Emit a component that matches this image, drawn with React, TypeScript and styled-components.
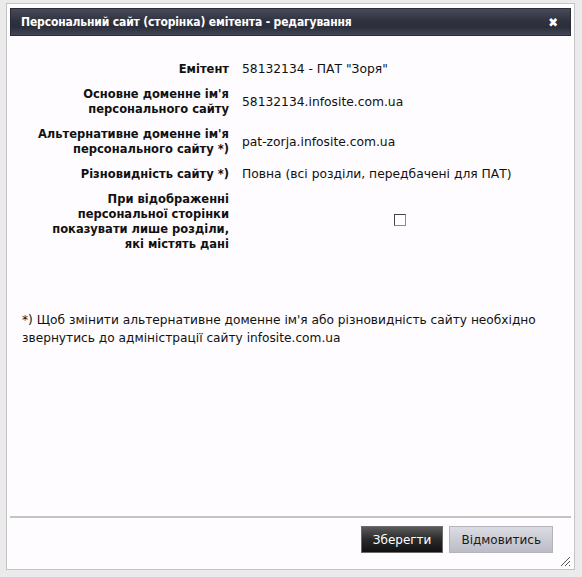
import React, {useState} from "react";
import styled, {createGlobalStyle} from "styled-components";

const GlobalStyle = createGlobalStyle`
  html, body {
    margin: 0;
    padding: 0;
    background: #ecebec;
  }
  body {
    font-family: "DejaVu Sans", Verdana, sans-serif;
    font-size: 12px;
    color: #111;
  }
`;

const Page = styled.div`
  padding: 3px 7px 7px 6px;
  height: 577px;
  box-sizing: border-box;
  display: flex;
`;

const Dialog = styled.div`
  position: relative;
  flex: 1;
  display: flex;
  flex-direction: column;
  background: #fefcfe;
  border: 1px solid #c4c4c4;
  padding: 4px 3px 0 3px;
`;

const TitleBar = styled.div`
  height: 26px;
  display: flex;
  align-items: center;
  justify-content: space-between;
  padding: 0 12px 0 10px;
  background: linear-gradient(#464a58 0%, #30333f 45%, #2b2e3a 70%, #44475a 100%);
  border: 1px solid #2a2c36;
  color: #fff;
  font-family: "DejaVu Sans Condensed", "DejaVu Sans", sans-serif;
  font-weight: bold;
  font-size: 12px;
  letter-spacing: -0.15px;
`;

const Close = styled.span`
  font-size: 13px;
  font-weight: bold;
  cursor: pointer;
`;

const Body = styled.div`
  flex: 1;
  padding: 26px 0 0 0;
`;

const Form = styled.div`
  display: grid;
  grid-template-columns: 219px 1fr;
  column-gap: 13px;
  row-gap: 10px;
  align-items: center;
  line-height: 15px;
  padding-right: 14px;
`;

const Label = styled.div`
  text-align: right;
  font-weight: bold;
  font-size: 11.5px;
  color: #111;
`;

const Value = styled.div<{ $center?: boolean }>`
  text-align: ${p => (p.$center ? "center" : "left")};
  font-size: 12.3px;
`;

const Check = styled.input`
  width: 12px;
  height: 12px;
  margin: 0 0 5px 0;
  appearance: none;
  border: 1px solid #8a8a8a;
  border-top-color: #444;
  border-left-color: #444;
  background: #fff;
  vertical-align: middle;
  &:checked {
    background: #333;
  }
`;

const Note = styled.p`
  margin: 59px 0 0 0;
  padding: 0 12px;
  line-height: 18px;
  font-size: 12.2px;
`;

const Footer = styled.div`
  display: flex;
  justify-content: flex-end;
  gap: 6px;
  border-top: 2px solid #c4c4c4;
  padding: 8px 18px 16px 0;
`;

const Button = styled.button<{ $primary?: boolean }>`
  height: 27px;
  padding: 0 11px;
  font-family: "DejaVu Sans", sans-serif;
  font-size: 12px;
  border: 1px solid ${p => (p.$primary ? "#6a6a6a" : "#b4b4bc")};
  color: ${p => (p.$primary ? "#fff" : "#1a1a1a")};
  background: ${p =>
    p.$primary
      ? "linear-gradient(#5a5a5a, #2a2a2a 50%, #111 100%)"
      : "linear-gradient(#dcdce4, #c8c8d2 60%, #bcbcc8 100%)"};
  cursor: pointer;
`;

const Grip = styled.svg`
  position: absolute;
  right: 3px;
  bottom: 2px;
`;

export default function App() {
  const [onlyFilled, setOnlyFilled] = useState(false);

  return (
    <>
      <GlobalStyle/>
      <Page>
        <Dialog>
          <TitleBar>
            <span>Персональний сайт (сторінка) емітента - редагування</span>
            <Close>✖</Close>
          </TitleBar>
          <Body>
            <Form>
              <Label>Емітент</Label>
              <Value>58132134 - ПАТ "Зоря"</Value>

              <Label>Основне доменне ім'я<br/>персонального сайту</Label>
              <Value>58132134.infosite.com.ua</Value>

              <Label>Альтернативне доменне ім'я<br/>персонального сайту *)</Label>
              <Value>pat-zorja.infosite.com.ua</Value>

              <Label>Різновидність сайту *)</Label>
              <Value>Повна (всі розділи, передбачені для ПАТ)</Value>

              <Label>При відображенні<br/>персональної сторінки<br/>показувати лише розділи,<br/>які містять дані</Label>
              <Value $center>
                <Check type="checkbox" checked={onlyFilled} onChange={e => setOnlyFilled(e.target.checked)}/>
              </Value>
            </Form>
            <Note>
              *) Щоб змінити альтернативне доменне ім'я або різновидність сайту необхідно
              звернутись до адміністрації сайту infosite.com.ua
            </Note>
          </Body>
          <Footer>
            <Button $primary>Зберегти</Button>
            <Button>Відмовитись</Button>
          </Footer>
          <Grip width="12" height="12" viewBox="0 0 12 12">
            <path d="M11 2 L2 11 M11 6 L6 11 M11 10 L10 11" stroke="#555" strokeWidth="1"/>
          </Grip>
        </Dialog>
      </Page>
    </>
  );
}
